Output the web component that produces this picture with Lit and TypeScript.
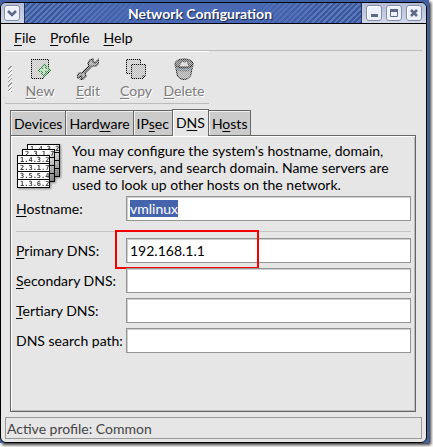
import { LitElement, html, svg, css, nothing } from "lit";
import { customElement } from "lit/decorators.js";

type Label = { pre?: string; key: string; post: string };

const menus: Label[] = [
  { key: "F", post: "ile" },
  { key: "P", post: "rofile" },
  { key: "H", post: "elp" },
];

const tabs: Label[] = [
  { pre: "Dev", key: "i", post: "ces" },
  { pre: "Hard", key: "w", post: "are" },
  { pre: "IP", key: "s", post: "ec" },
  { pre: "D", key: "N", post: "S" },
  { pre: "H", key: "o", post: "sts" },
];

const label = (l: Label) => html`${l.pre ?? ""}<u>${l.key}</u>${l.post}`;

// Checkered overlay that greys out an icon.
const stipple = (id: string) => svg`
  <pattern id=${id} width="2" height="2" patternUnits="userSpaceOnUse">
    <path d="M0 0h1v1h-1zM1 1h1v1h-1z" fill="#e6e6e6"/>
  </pattern>`;

const newIcon = html`<svg width="22" height="22" viewBox="0 0 22 22" shape-rendering="crispEdges">
  <defs>${stipple("s1")}</defs>
  <path d="M2.500 1.500h17v14l-5 5h-12z" fill="#c8c8c8" stroke="#000"/>
  <path d="M14.500 20.500v-5h5" fill="#eee" stroke="#444"/>
  <path d="M15 5l3 3v2h2l2 2-2 2h-2v2l-3 3-3-3v-2h-2l-2-2 2-2h2v-2z" fill="#2f8a3a"/>
  <path d="M15 8v8M11 12h8" stroke="#b5dcb9" stroke-width="2"/>
  <rect width="22" height="22" fill="url(#s1)" opacity=".85"/>
</svg>`;

const editIcon = html`<svg width="22" height="22" viewBox="0 0 22 22">
  <defs>${stipple("s2")}</defs>
  <path d="M16 1l-3 1-2 3 1 3-7 7-3 0-2 3 1 2 3-2 1 2-2 2 3-1 3-3-1-3 7-7 4 0 3-3 0-4-4 4-2-1 0-2z" fill="#a2a2a2" stroke="#111" stroke-width="1.200"/>
  <rect width="22" height="22" fill="url(#s2)" opacity=".6" shape-rendering="crispEdges"/>
</svg>`;

const copyIcon = html`<svg width="22" height="22" viewBox="0 0 22 22" shape-rendering="crispEdges">
  <defs>${stipple("s3")}</defs>
  <path d="M1.500 1.500h14v14h-14z" fill="#ccc" stroke="#000"/>
  <path d="M6.500 6.500h14v11l-3 3h-11z" fill="#bbb" stroke="#000"/>
  <path d="M17.500 20v-3h3" fill="#eee" stroke="#555"/>
  <rect width="22" height="22" fill="url(#s3)" opacity=".85"/>
</svg>`;

const deleteIcon = html`<svg width="22" height="22" viewBox="0 0 22 22">
  <defs>${stipple("s4")}</defs>
  <path d="M2.500 8l2 10q2 3.500 6.500 3.500t6.500-3.500l2-10z" fill="#aaa" stroke="#111"/>
  <ellipse cx="11" cy="5.500" rx="9" ry="4.500" fill="#777" stroke="#111"/>
  <path d="M2 6q0 5 9 5t9-5v2q0 5-9 5t-9-5z" fill="#8ea0b4" stroke="#444" stroke-width=".6"/>
  <path d="M6 8l3-5 3 1 2-1 2 5" fill="#ddd" stroke="#333" stroke-width=".8"/>
  <rect width="22" height="22" fill="url(#s4)" opacity=".6" shape-rendering="crispEdges"/>
</svg>`;

const tools = [
  { l: { key: "N", post: "ew" }, icon: newIcon },
  { l: { key: "E", post: "dit" }, icon: editIcon },
  { l: { key: "C", post: "opy" }, icon: copyIcon },
  { l: { key: "D", post: "elete" }, icon: deleteIcon },
];

// One sheet of addresses; sheets behind the front one show their first row only.
const sheet = (x: number, y: number, rows: string[], fill: string) => svg`
  <rect x=${x + 0.5} y=${y + 0.5} width="32" height="32" fill=${fill} stroke="#000" shape-rendering="crispEdges"/>
  ${[0, 1, 2].map((i) => svg`<path d="M${x} ${y + 8.5 + i * 8}h33" stroke="#000" shape-rendering="crispEdges"/>`)}
  ${rows.map((r, i) => svg`<text class="digits" x=${x + 3} y=${y + 7 + i * 8}>${r}</text>`)}`;

const hostsIcon = html`<svg class="sheets" width="50" height="50" viewBox="0 0 50 50" aria-hidden="true">
  <defs><linearGradient id="g" x2="1" y2="1"><stop offset=".4" stop-color="#fff"/><stop offset="1" stop-color="#777"/></linearGradient></defs>
  ${sheet(10, 0, ["1.4.3.2"], "url(#g)")}
  ${sheet(5, 5, ["2.3.1.7"], "url(#g)")}
  ${sheet(0, 11, ["1.4.3.2", "2.3.1.7", "3.5.5.4", "1.3.6.2"], "#fff")}
</svg>`;

const dnsFields: { id: string; l: Label; value: string; marked?: boolean }[] = [
  { id: "primary", l: { key: "P", post: "rimary DNS:" }, value: "192.168.1.1", marked: true },
  { id: "secondary", l: { key: "S", post: "econdary DNS:" }, value: "" },
  { id: "tertiary", l: { key: "T", post: "ertiary DNS:" }, value: "" },
  { id: "search", l: { key: "", post: "DNS search path:" }, value: "" },
];

@customElement("app-root")
export class AppRoot extends LitElement {
  static styles = css`
    :host {
      display: flex;
      box-sizing: border-box;
      min-height: 100vh;
      padding: 0 4px 4px 0;
      background: #fff;
      color: #000;
      font: 14px/17px Lato, "Noto Sans", sans-serif;
      overflow: hidden;
    }
    * { box-sizing: border-box; }
    button, input { font: inherit; color: inherit; margin: 0; }
    button { background: none; border: 0; padding: 0; }
    svg { display: block; }
    u { text-underline-offset: 2px; text-decoration-skip-ink: none; }
    .desk {
      flex: 1;
      min-width: 0;
      display: flex;
      padding: 2px 2px 0 0;
      background: #3f5fa6;
      box-shadow: 2px 2px 3px rgba(0, 0, 0, 0.8);
    }
    .window {
      flex: 1;
      min-width: 0;
      display: flex;
      flex-direction: column;
      border: 1px solid #000;
      border-radius: 6px;
      background: #e6e6e6;
      overflow: hidden;
    }
    .titlebar { display: flex; height: 21px; border-bottom: 1px solid #000; }
    .controls {
      display: flex;
      align-items: center;
      gap: 4px;
      padding: 0 4px;
      background: linear-gradient(#b4bcd6, #d2d7e8);
    }
    .left { padding: 0 4px 0 3px; border-right: 1px solid #26355f; }
    .right { border-left: 1px solid #26355f; }
    .controls button {
      display: grid;
      place-items: center;
      width: 16px;
      height: 16px;
      border: 1px solid #808cab;
      border-radius: 3px;
      background: #eef1fb;
      box-shadow: inset 1px 1px #fff;
    }
    .title {
      flex: 1;
      margin: 0;
      padding-left: 14px;
      font-size: 14px;
      line-height: 21px;
      font-weight: 700;
      text-align: center;
      color: #fff;
      text-shadow: 1px 1px 1px #14234d;
      background:
        linear-gradient(90deg, transparent 10%, #4a69b4 38%, #4a69b4 66%, transparent 90%),
        repeating-linear-gradient(135deg, #5a79c0 0 2px, #3a5798 2px 4px);
    }
    .menubar {
      display: flex;
      gap: 14px;
      height: 27px;
      margin: 0 4px;
      padding: 0 9px;
      border-bottom: 1px solid #bcbcbc;
    }
    .toolbar {
      display: flex;
      align-self: flex-start;
      height: 53px;
      margin-left: 4px;
      padding: 6px 1px 0 3px;
      border-top: 1px solid #fff;
      border-bottom: 1px solid #bcbcbc;
    }
    .grip {
      width: 4px;
      height: 26px;
      margin: 8px 4px 0 0;
      background: repeating-linear-gradient(135deg, #e6e6e6 0 1px, #fff 1px 2px, #999 2px 3px);
    }
    .tool {
      display: flex;
      flex-direction: column;
      align-items: center;
      gap: 2px;
      width: 48px;
      color: #7c7c7c;
      text-shadow: 1px 1px #fff;
    }
    .notebook { flex: 1; display: flex; flex-direction: column; margin: 5px 10px 5px 9px; }
    .tabs { display: flex; align-items: flex-end; padding-right: 8px; }
    .tab {
      height: 25px;
      padding: 0 3px;
      background: #cbcbcb;
      border: 1px solid #666;
      border-bottom: 0;
      box-shadow: inset 1px 1px #efefef;
    }
    .tab + .tab { margin-left: -1px; }
    .tab.active {
      position: relative;
      height: 27px;
      margin-bottom: -1px;
      padding-bottom: 2px;
      background: #e6e6e6;
      box-shadow: inset 1px 1px #fff;
    }
    .panel {
      flex: 1;
      padding: 8px 4px 8px 5px;
      border: 1px solid #666;
      box-shadow: inset 1px 1px #fff, inset -1px -1px #bbb;
    }
    .intro { display: flex; gap: 5px; height: 52px; }
    .intro p { margin: -2px 0 0; flex: 1; white-space: nowrap; }
    .sheets { flex: none; margin-left: 1px; filter: drop-shadow(1px 1px 1px rgba(0, 0, 0, 0.4)); }
    .digits { font: bold 7px "DejaVu Sans Mono", monospace; fill: #444; }
    .rows { display: grid; gap: 5px; }
    .row { display: grid; grid-template-columns: 110px 1fr; align-items: center; }
    .field { position: relative; }
    .field input {
      display: block;
      width: 100%;
      height: 25px;
      padding: 0 3px;
      border: 1px solid #949494;
      border-radius: 0;
      background: #fff;
      box-shadow: inset 1px 1px #d0d0d0;
      outline: 0;
    }
    input::selection { background: #4664ac; color: #fff; }
    .marker {
      position: absolute;
      left: -11px;
      top: -8px;
      width: 144px;
      height: 39px;
      border: 2px solid #f40000;
      pointer-events: none;
    }
    hr { width: 100%; margin: 10px 0 6px; border: 0; border-top: 1px solid #c4c4c4; }
    .status {
      margin: 0 4px 3px;
      padding: 2px 1px 1px;
      border: 1px solid #999;
      color: #444;
    }
  `;

  firstUpdated() {
    const host = this.renderRoot.querySelector<HTMLInputElement>("#hostname")!;
    host.focus({ preventScroll: true });
    host.select();
  }

  render() {
    return html`<div class="desk"><main class="window">
      <header class="titlebar">
        <div class="controls left">
          <button aria-label="Window menu"><svg width="10" height="8" viewBox="0 0 10 8"><path d="M1 2l4 4 4-4" fill="none" stroke="#5e6988" stroke-width="2.500"/></svg></button>
        </div>
        <h1 class="title">Network Configuration</h1>
        <div class="controls right">
          <button aria-label="Minimize"><svg width="8" height="8"><path d="M1 5h7v3h-7z" fill="#5e6988"/></svg></button>
          <button aria-label="Maximize"><svg width="8" height="8"><path d="M.500 1h7v6.500h-7z" fill="none" stroke="#5e6988"/><path d="M0 0h8v3h-8z" fill="#5e6988"/></svg></button>
          <button aria-label="Close"><svg width="8" height="8"><path d="M1 1l6 6M7 1l-6 6" stroke="#5e6988" stroke-width="2.500"/></svg></button>
        </div>
      </header>
      <nav class="menubar">${menus.map((m) => html`<button>${label(m)}</button>`)}</nav>
      <div class="toolbar" role="toolbar">
        <span class="grip"></span>
        ${tools.map((t) => html`<button class="tool" disabled>${t.icon}<span>${label(t.l)}</span></button>`)}
      </div>
      <section class="notebook">
        <div class="tabs" role="tablist">
          ${tabs.map((t, i) => html`<button class="tab ${i === 3 ? "active" : ""}" role="tab" aria-selected=${i === 3}>${label(t)}</button>`)}
        </div>
        <div class="panel" role="tabpanel">
          <div class="intro">
            ${hostsIcon}
            <p>You may configure the system's hostname, domain,<br>name servers, and search domain. Name servers are<br>used to look up other hosts on the network.</p>
          </div>
          <div class="row">
            <label for="hostname"><u>H</u>ostname:</label>
            <div class="field"><input id="hostname" value="vmlinux" spellcheck="false"></div>
          </div>
          <hr>
          <div class="rows">
            ${dnsFields.map((f) => html`<div class="row">
              <label for=${f.id}>${label(f.l)}</label>
              <div class="field"><input id=${f.id} .value=${f.value}>${f.marked ? html`<span class="marker"></span>` : nothing}</div>
            </div>`)}
          </div>
        </div>
      </section>
      <footer class="status">Active profile: Common</footer>
    </main></div>`;
  }
}
